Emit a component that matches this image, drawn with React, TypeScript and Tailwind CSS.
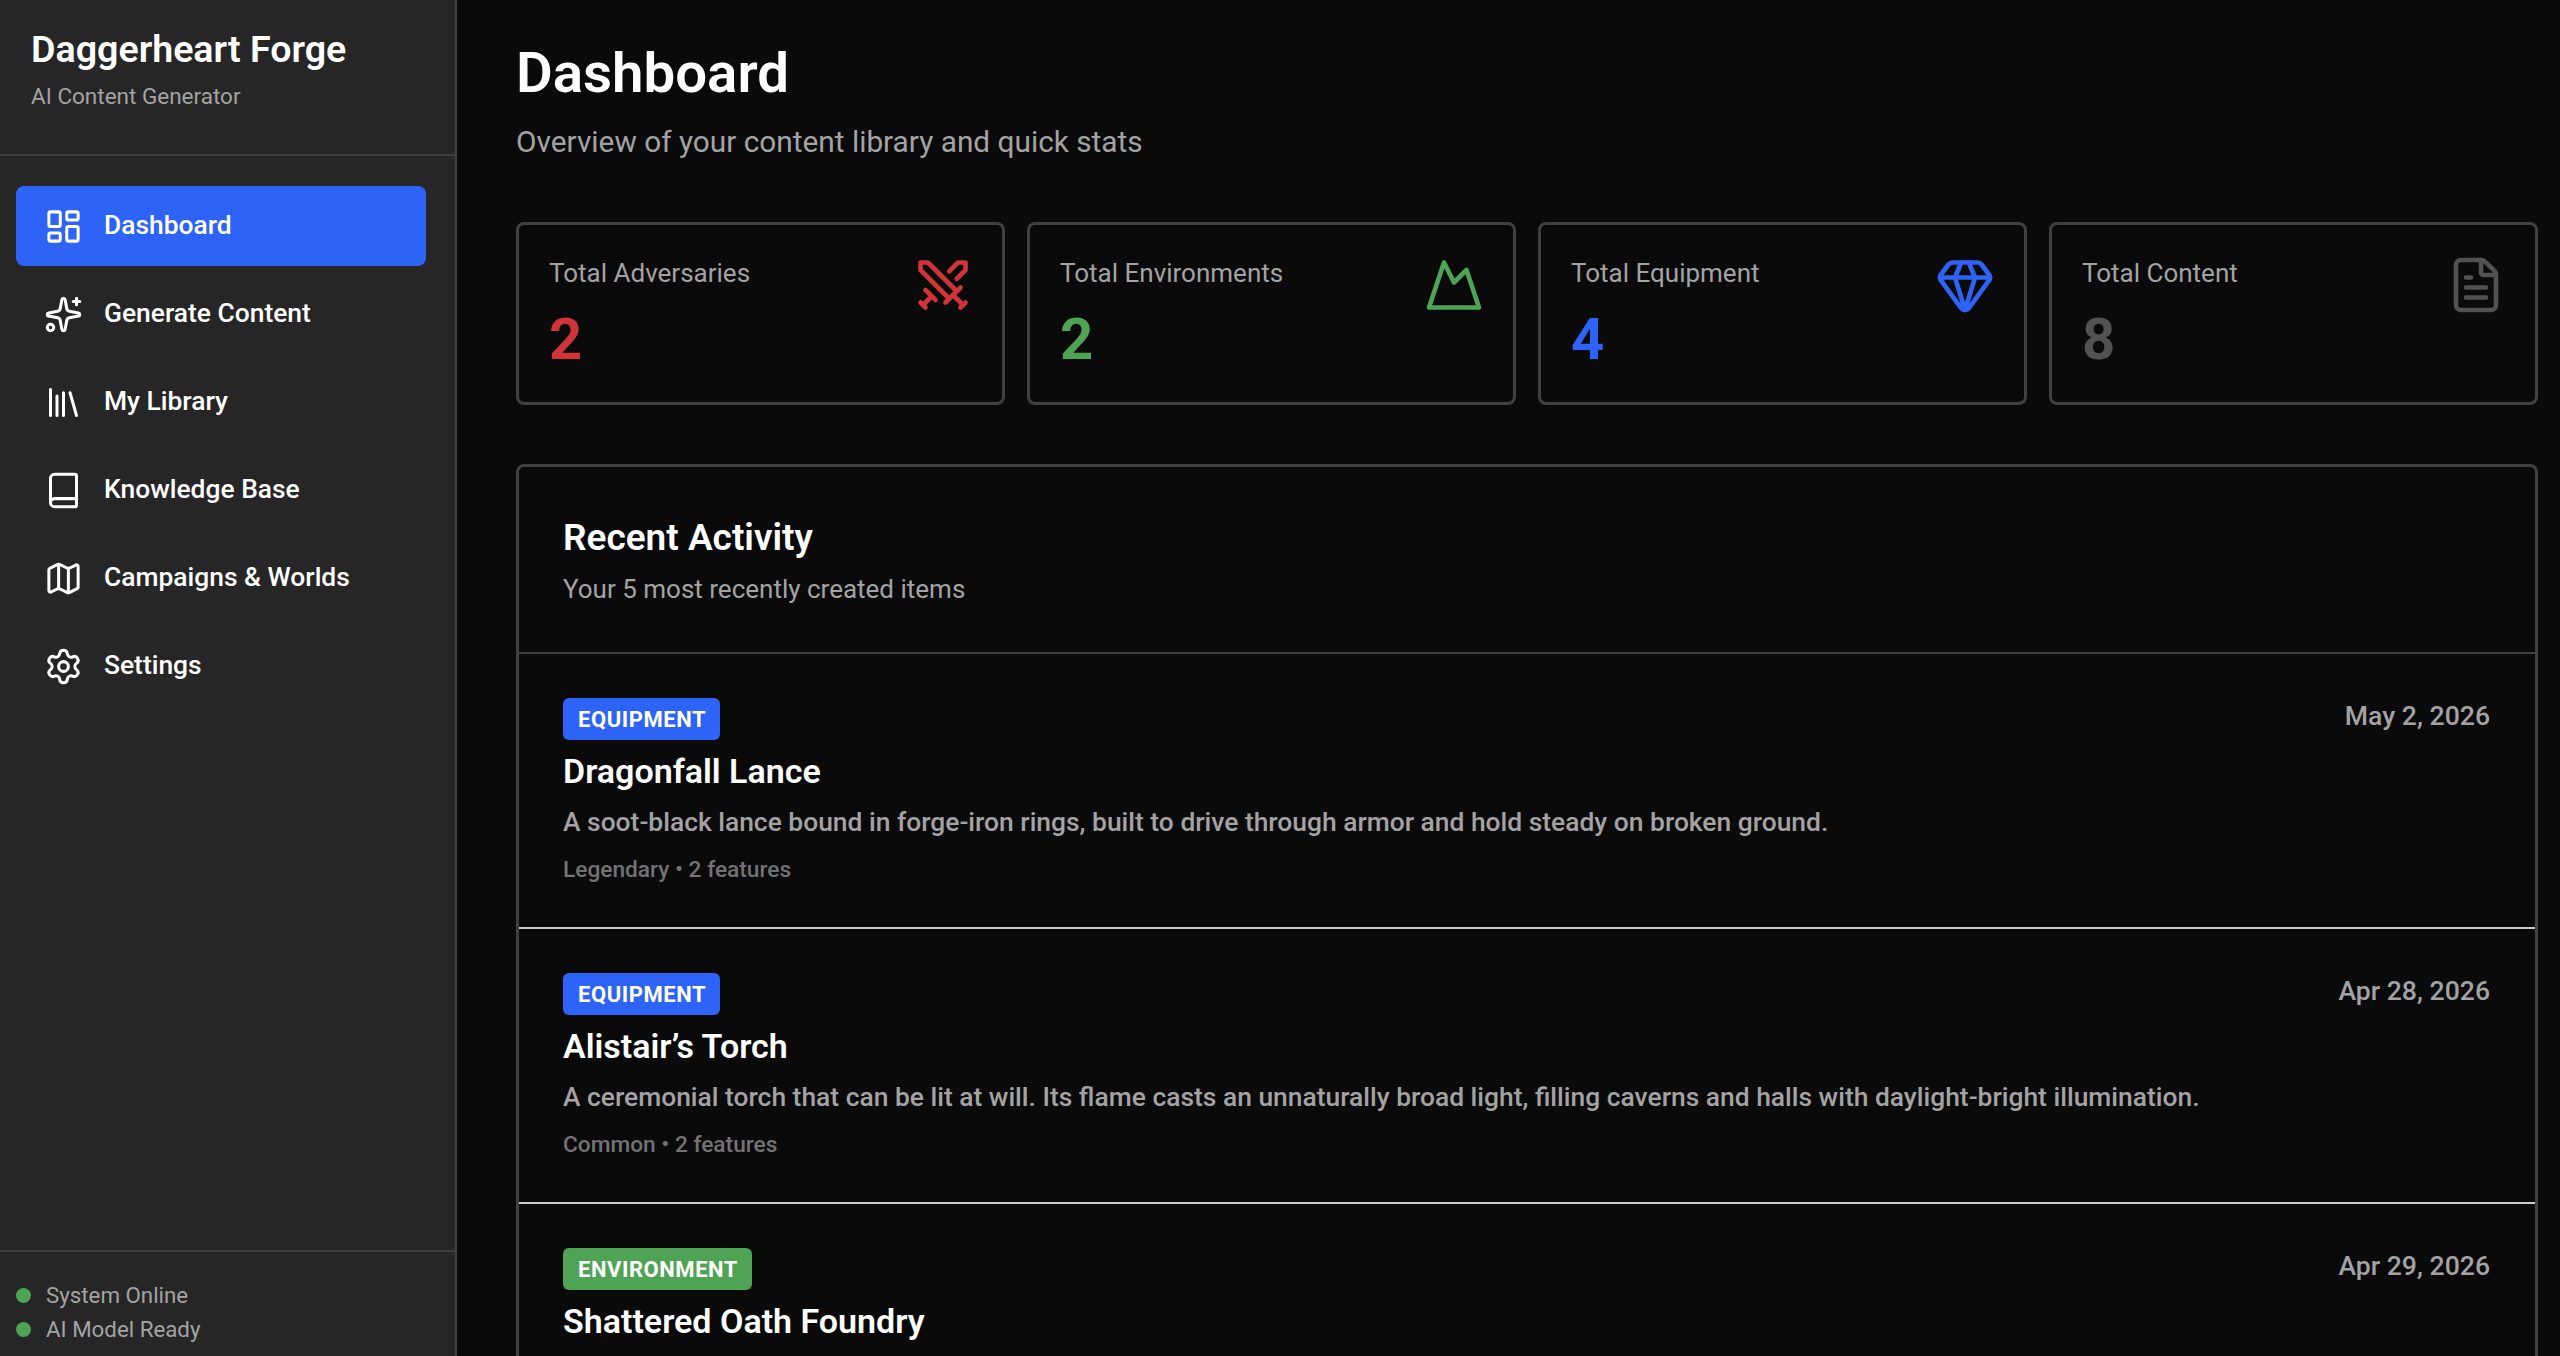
import { Book, FileText, Gem, LayoutDashboard, Library, Map, Mountain, Settings, Sparkles, Swords } from "lucide-react";

const nav = [
  { label: "Dashboard", icon: LayoutDashboard, active: true },
  { label: "Generate Content", icon: Sparkles },
  { label: "My Library", icon: Library },
  { label: "Knowledge Base", icon: Book },
  { label: "Campaigns & Worlds", icon: Map },
  { label: "Settings", icon: Settings },
];

const stats = [
  { label: "Total Adversaries", value: "2", icon: Swords, color: "text-[#d13438]" },
  { label: "Total Environments", value: "2", icon: Mountain, color: "text-[#4ea354]" },
  { label: "Total Equipment", value: "4", icon: Gem, color: "text-[#2d63f6]" },
  { label: "Total Content", value: "8", icon: FileText, color: "text-[#525252]" },
];

const items = [
  {
    type: "EQUIPMENT",
    badge: "bg-[#2d63f6]",
    title: "Dragonfall Lance",
    date: "May 2, 2026",
    desc: "A soot-black lance bound in forge-iron rings, built to drive through armor and hold steady on broken ground.",
    meta: "Legendary • 2 features",
  },
  {
    type: "EQUIPMENT",
    badge: "bg-[#2d63f6]",
    title: "Alistair’s Torch",
    date: "Apr 28, 2026",
    desc: "A ceremonial torch that can be lit at will. Its flame casts an unnaturally broad light, filling caverns and halls with daylight-bright illumination.",
    meta: "Common • 2 features",
  },
  {
    type: "ENVIRONMENT",
    badge: "bg-[#4ea354]",
    title: "Shattered Oath Foundry",
    date: "Apr 29, 2026",
    desc: "",
    meta: "",
  },
];

export default function App() {
  return (
    <div className="flex h-screen overflow-hidden bg-[#0a0a0a] text-white font-['Roboto',sans-serif]">
      <aside className="flex w-[457px] shrink-0 flex-col border-r-2 border-[#404040] bg-[#262626]">
        <div className="h-[156px] border-b-2 border-[#404040] pl-[31px] pr-4 pt-[26px]">
          <h1 className="text-[37.6px] font-semibold leading-[46px]">Daggerheart Forge</h1>
          <p className="mt-[9px] text-[22.5px] leading-[30px] text-[#a3a3a3]">AI Content Generator</p>
        </div>
        <nav className="flex flex-1 flex-col gap-2 pl-4 pr-[29px] pt-[30px]">
          {nav.map((n) => (
            <div
              key={n.label}
              className={`flex h-[80px] items-center gap-[21px] rounded-lg pl-[28px] pr-8 text-[26.4px] font-medium ${n.active ? "bg-[#2d63f6]" : ""}`}
            >
              <n.icon className="h-[39px] w-[39px] shrink-0" strokeWidth={1.85} />
              <span>{n.label}</span>
            </div>
          ))}
        </nav>
        <div className="h-[106px] border-t-2 border-[#404040] pl-4 pt-[26px] text-[22.3px] leading-[34px] text-[#a3a3a3]">
          {["System Online", "AI Model Ready"].map((s) => (
            <div key={s} className="flex items-center gap-[15px]">
              <span className="h-[15px] w-[15px] rounded-full bg-[#4ea354]" />
              <span>{s}</span>
            </div>
          ))}
        </div>
      </aside>
      <main className="min-w-0 flex-1 pl-[59px] pr-[22px] pt-[39px]">
        <h2 className="text-[56.4px] font-semibold leading-[68px]">Dashboard</h2>
        <p className="mt-[17px] text-[29.8px] leading-[36px] text-[#a3a3a3]">Overview of your content library and quick stats</p>
        <div className="mt-[62px] grid grid-cols-4 gap-[22px]">
          {stats.map((s) => (
            <div key={s.label} className="flex h-[183px] justify-between rounded-lg border-[3px] border-[#404040] pl-[30px] pr-[29px] pt-[30px]">
              <div>
                <div className="text-[26px] leading-[37px] text-[#a3a3a3]">{s.label}</div>
                <div className={`mt-[11px] text-[58px] font-bold leading-[72px] ${s.color}`}>{s.value}</div>
              </div>
              <s.icon className={`h-[60px] w-[60px] ${s.color}`} strokeWidth={1.85} />
            </div>
          ))}
        </div>
        <section className="mt-[59px] rounded-lg border-[3px] border-b-0 border-[#404040]">
          <div className="h-[187px] border-b-2 border-[#404040] px-[44px] pt-[48px]">
            <h3 className="text-[37px] font-semibold leading-[46px]">Recent Activity</h3>
            <p className="mt-[11px] text-[26px] leading-[34px] text-[#a3a3a3]">Your 5 most recently created items</p>
          </div>
          {items.map((it, i) => (
            <div key={it.title} className={`flex h-[275px] justify-between pl-[44px] pr-[45px] pt-[44px] ${i < 2 ? "border-b-2 border-[#cccccc]" : ""}`}>
              <div>
                <span className={`inline-flex h-[42px] items-center rounded-md pl-[15px] pr-[14px] text-[22px] font-bold tracking-wide ${it.badge}`}>{it.type}</span>
                <div className="mt-[9px] text-[34px] font-semibold leading-[44px]">{it.title}</div>
                <div className="mt-[11px] text-[26.4px] font-medium leading-[36px] text-[#a3a3a3]">{it.desc}</div>
                <div className="mt-[15px] text-[22.7px] font-medium leading-[30px] text-[#737373]">{it.meta}</div>
              </div>
              <div className="pt-[1px] text-[26.6px] font-medium leading-[34px] text-[#a3a3a3]">{it.date}</div>
            </div>
          ))}
        </section>
      </main>
    </div>
  );
}
